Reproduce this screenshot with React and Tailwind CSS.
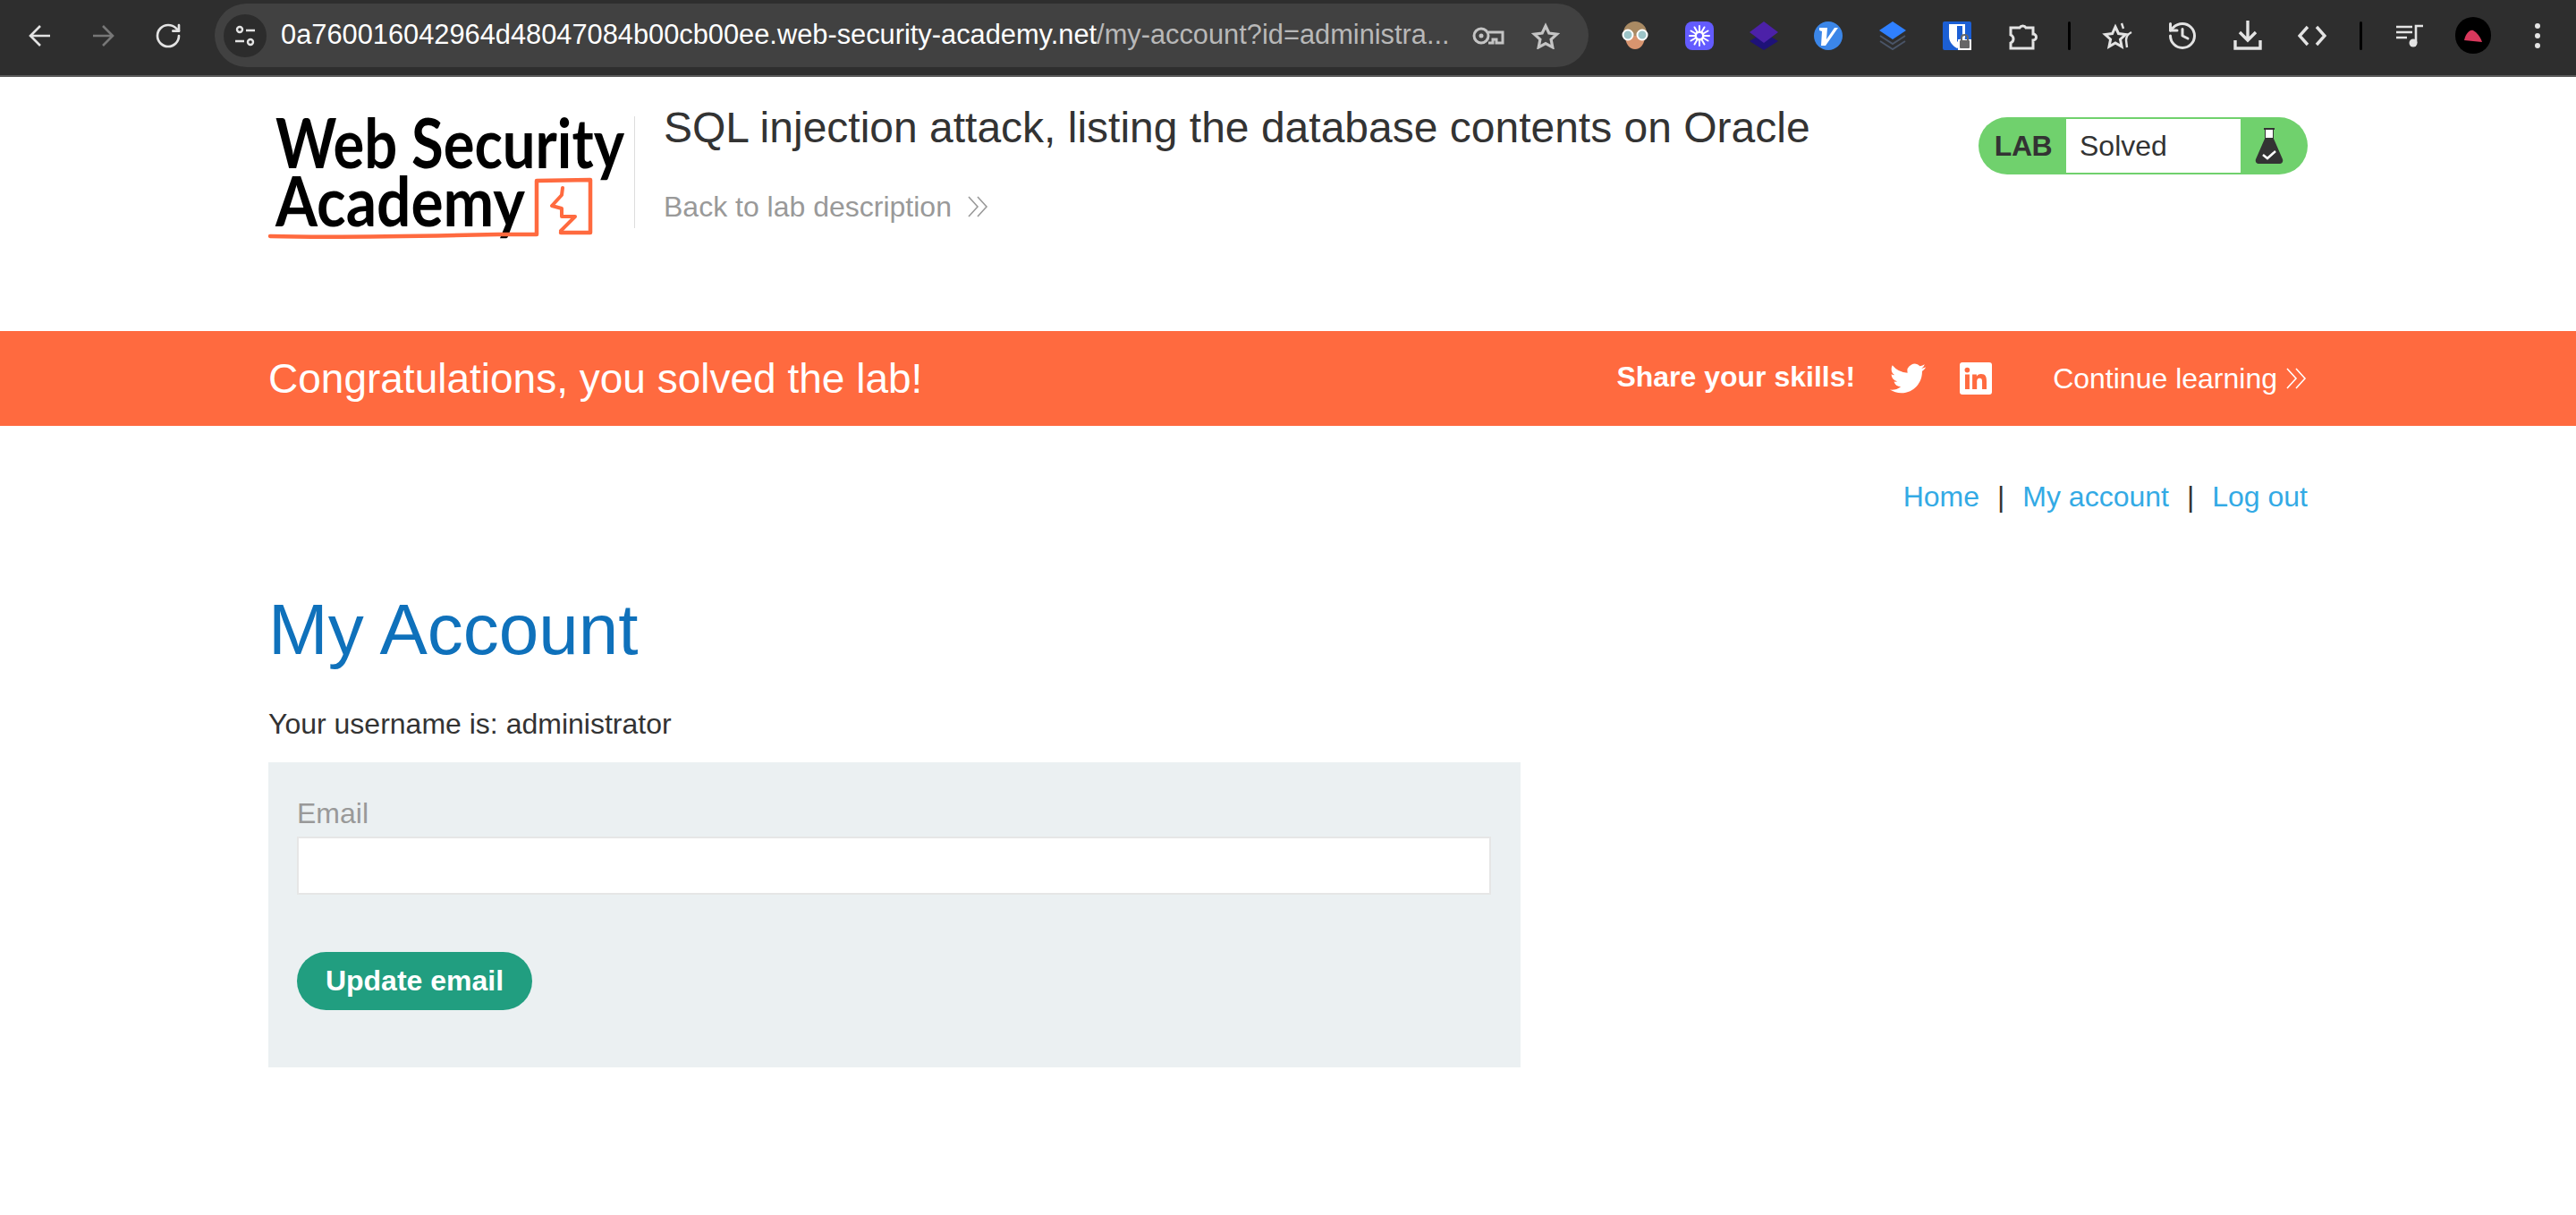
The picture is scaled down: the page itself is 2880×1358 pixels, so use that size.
import { RotateCw, History } from 'lucide-react'

const ARIAL = 'font-["Liberation_Sans",Arial,sans-serif]'
const RAYS = [0, 30, 60, 90, 120, 150]

function Chevrons({ className }) {
  return (
    <svg viewBox="0 0 26 24" fill="none" stroke="currentColor" strokeWidth="1.6" className={className}>
      <path d="M3 1l10 11L3 23M13 1l10 11-10 11" />
    </svg>
  )
}

function Logo() {
  return (
    <svg viewBox="0 0 410 150" className="w-[410px] h-[150px] shrink-0 overflow-visible">
      <text x="8" y="58" fontFamily="Lato, sans-serif" fontSize="76" fontWeight="700" fill="#000" textLength="390" lengthAdjust="spacingAndGlyphs">Web Security</text>
      <text x="8" y="123" fontFamily="Lato, sans-serif" fontSize="76" fontWeight="700" fill="#000" textLength="279" lengthAdjust="spacingAndGlyphs">Academy</text>
      <path d="M2 134c70 2 170 0 255-2h43V72l60-1v59h-33" fill="none" stroke="#ff6a3f" strokeWidth="4.500" strokeLinecap="round" strokeLinejoin="round" />
      <path d="M329 80l-1 8-11 12 11 3v9h15l-16 16" fill="none" stroke="#ff6a3f" strokeWidth="4" strokeLinecap="round" strokeLinejoin="round" />
    </svg>
  )
}

function Flask() {
  return (
    <svg viewBox="0 0 32 40" className="w-[32px] h-[40px]">
      <path d="M10 0h12v2h-1v10l10 23c1 3-1 5-3 5H4c-2 0-4-2-3-5l10-23V2h-1z" fill="#333" />
      <path d="M12 2h8v9h-8z" fill="#fff" />
      <path d="M9 30l5 4 9-8" fill="none" stroke="#fff" strokeWidth="2.5" />
    </svg>
  )
}

function BrowserBar() {
  return (
    <div className="flex items-center h-[86px] pb-[5px] bg-[#2e2e2e] border-b-2 border-[#5a5a5a] text-[#e3e3e3]">
      <div className="flex items-center w-[240px] pl-[32px]">
        <svg viewBox="0 0 24 24" className="w-[24px] h-[24px]" fill="none" stroke="#e3e3e3" strokeWidth="2.6">
          <path d="M24 12H3M13 1L2 12l11 11" />
        </svg>
        <svg viewBox="0 0 24 24" className="w-[24px] h-[24px] ml-[48px]" fill="none" stroke="#777" strokeWidth="2.6">
          <path d="M0 12h21M11 1l11 11-11 11" />
        </svg>
        <RotateCw size={32} strokeWidth={2} className="ml-[44px]" />
      </div>
      <div className="flex items-center w-[1536px] h-[71px] rounded-full bg-[#414141] pl-[10px] pr-[32px]">
        <div className="flex items-center justify-center w-[48px] h-[48px] rounded-full bg-[#2c2c2c] shrink-0">
          <svg viewBox="0 0 24 24" className="w-[24px] h-[24px]" fill="none" stroke="#e3e3e3" strokeWidth="2.4">
            <circle cx="6" cy="5" r="3" /><path d="M13 6h10M1 18h10" /><circle cx="18" cy="19" r="3" />
          </svg>
        </div>
        <div className={`${ARIAL} ml-[16px] text-[30.8px] whitespace-nowrap flex-1 min-w-0 text-white`}>
          0a760016042964d48047084b00cb00ee.web-security-academy.net<span className="text-[#b8b8b8]">/my-account?id=administra...</span>
        </div>
        <svg viewBox="0 0 36 20" className="w-[36px] h-[20px] shrink-0" fill="none" stroke="#c4c4c4" strokeWidth="3">
          <circle cx="10" cy="10" r="8" />
          <circle cx="10" cy="10" r="2.500" fill="#c4c4c4" stroke="none" />
          <path d="M18 6h16v12h-7v-4h-4v4h-5" />
        </svg>
        <svg viewBox="0 0 32 30" className="w-[32px] h-[30px] ml-[30px] shrink-0" fill="none" stroke="#c4c4c4" strokeWidth="3.200">
          <path d="M16 4l3.800 8 8.800 1.100-6.500 6 1.700 8.700L16 23.500l-7.800 4.300 1.700-8.700-6.500-6L12.200 12z" />
        </svg>
      </div>
      <div className="flex items-center flex-1 pl-[37px]">
        <svg viewBox="0 0 30 32" className="w-[30px] h-[32px]">
          <circle cx="15" cy="13" r="13" fill="#a98a63" />
          <path d="M4 16h22c0 9-5 15-11 15S4 25 4 16z" fill="#d8946f" />
          <circle cx="7" cy="15" r="5.500" fill="#9cc4c8" stroke="#fff" strokeWidth="2" />
          <circle cx="23" cy="15" r="5.500" fill="#9cc4c8" stroke="#fff" strokeWidth="2" />
        </svg>
        <div className="flex items-center justify-center w-[32px] h-[32px] rounded-[8px] bg-[#635bff] ml-[41px]">
          <svg viewBox="0 0 24 24" className="w-[24px] h-[24px]">
            {RAYS.map(deg => (
              <path key={deg} d="M12 1v22" stroke="#fff" strokeWidth="2" strokeLinecap="round" transform={`rotate(${deg} 12 12)`} />
            ))}
            <circle cx="12" cy="12" r="5.500" fill="#fff" />
            <circle cx="12" cy="12" r="3" fill="#635bff" />
          </svg>
        </div>
        <svg viewBox="0 0 32 32" className="w-[32px] h-[32px] ml-[40px]">
          <path d="M16 12l16 10-16 10L0 22z" fill="#1e1278" />
          <path d="M16 0l16 12-16 12L0 12z" fill="#4c21a8" />
        </svg>
        <svg viewBox="0 0 32 32" className="w-[32px] h-[32px] ml-[40px]">
          <circle cx="16" cy="16" r="16" fill="#3b86e8" />
          <path d="M6 7h9l-1 13L23 7h4L13 27H8l1-16-3-1z" fill="#fff" />
        </svg>
        <svg viewBox="0 0 30 32" className="w-[30px] h-[32px] ml-[41px]">
          <path d="M15 0l15 10-15 10L0 10z" fill="#2f80ff" />
          <path d="M1 16l14 9 14-9M1 22l14 9 14-9" fill="none" stroke="#4a5568" strokeWidth="2" />
        </svg>
        <svg viewBox="0 0 32 32" className="w-[32px] h-[32px] ml-[41px]">
          <rect width="32" height="32" rx="2" fill="#1c5fd4" />
          <path d="M7 3h18v14c0 6-5 11-9 13-4-2-9-7-9-13z" fill="#fff" />
          <path d="M16 5h6v13c-2 1-4 3-6 5z" fill="#1c5fd4" />
          <path d="M17 32V20h15v12z" fill="#fff" />
          <rect x="19" y="21" width="11" height="9" rx="1" fill="#666" />
          <path d="M21 21v-3c0-4 7-4 7 0v3" fill="none" stroke="#666" strokeWidth="2" />
        </svg>
        <svg viewBox="0 0 32 32" className="w-[32px] h-[32px] ml-[42px]" fill="none" stroke="#e3e3e3" strokeWidth="3">
          <path d="M2 7h10a4 4 0 0 1 7 0h8v7a3.500 3.500 0 0 1 0 7v9H2v-6c4-2 4-7 0-9z" />
        </svg>
        <div className="w-[3px] h-[32px] rounded-full bg-black ml-[34px]" />
        <svg viewBox="0 0 35 32" className="w-[35px] h-[32px] ml-[35px]" fill="none" stroke="#e3e3e3" strokeWidth="3">
          <path d="M15 6l3.500 7.500 8 1-6 5.500 1.600 8L15 24l-7 4 1.600-8-6-5.500 8-1z" />
          <path d="M22 2l2 6M33 12c-4 2-6 4-6 9l1 8" strokeWidth="2.400" />
        </svg>
        <History size={36} strokeWidth={2} className="ml-[37px] -mr-[4px]" />
        <svg viewBox="0 0 32 34" className="w-[32px] h-[34px] ml-[43px]" fill="none" stroke="#e3e3e3" strokeWidth="3.400">
          <path d="M16 0v21M7 13l9 9 9-9M2 22v9h28v-9" />
        </svg>
        <svg viewBox="0 0 32 24" className="w-[32px] h-[24px] ml-[40px]" fill="none" stroke="#e3e3e3" strokeWidth="3.400">
          <path d="M11 2L2 12l9 10M21 2l9 10-9 10" />
        </svg>
        <div className="w-[3px] h-[32px] rounded-full bg-black ml-[37px]" />
        <svg viewBox="0 0 30 26" className="w-[30px] h-[26px] ml-[38px]" fill="none" stroke="#e3e3e3" strokeWidth="2.600">
          <path d="M0 3h18M0 9h18M0 15h12M22 21V2h8" />
          <circle cx="19" cy="21" r="4.500" fill="#e3e3e3" stroke="none" />
        </svg>
        <div className="flex items-center justify-center w-[40px] h-[41px] rounded-full bg-black ml-[36px]">
          <svg viewBox="0 0 20 14" className="w-[20px] h-[14px]"><path d="M0 12C2 4 6 0 10 1c4 2 8 7 10 13z" fill="#d9385c" /></svg>
        </div>
        <svg viewBox="0 0 6 28" className="w-[6px] h-[28px] ml-[49px]" fill="#e3e3e3">
          <circle cx="3" cy="3" r="3" /><circle cx="3" cy="14" r="3" /><circle cx="3" cy="25" r="3" />
        </svg>
      </div>
    </div>
  )
}

function LabHeader() {
  return (
    <div className="flex w-[2280px] mx-auto h-[284px] pt-[44px]">
      <Logo />
      <div className="w-[1px] h-[125px] bg-[#ddd] ml-[-1px]" />
      <div className="ml-[32px] flex-1">
        <h2 className="text-[48px] leading-[50px] text-[#333] mt-[-12px] whitespace-nowrap">SQL injection attack, listing the database contents on Oracle</h2>
        <a className="flex items-center mt-[44px] text-[32px] leading-[38px] text-[#999]">
          Back to lab description
          <Chevrons className="w-[26px] h-[24px] ml-[16px]" />
        </a>
      </div>
      <div className="flex items-stretch w-[368px] h-[64px] mt-[1px] rounded-full bg-[#70d16d] p-[2px]">
        <div className="flex items-center justify-center w-[96px] text-[32px] font-bold text-[#333] tracking-[-0.5px]">LAB</div>
        <div className="flex items-center w-[195px] bg-white text-[32px] text-[#333] pl-[15px]">Solved</div>
        <div className="flex items-center justify-center flex-1 pr-[10px]"><Flask /></div>
      </div>
    </div>
  )
}

function Banner() {
  return (
    <div className="bg-[#ff6a3f] h-[106px] text-white">
      <div className="flex items-center w-[2280px] h-full mx-auto">
        <h4 className="text-[46px] flex-1">Congratulations, you solved the lab!</h4>
        <span className="text-[32px] font-bold mb-[4px]">Share your skills!</span>
        <svg viewBox="0 0 24 24" fill="#fff" className="w-[40px] h-[40px] ml-[39px]">
          <path d="M23.95 4.57a10 10 0 0 1-2.82.77 4.96 4.96 0 0 0 2.16-2.72 9.9 9.9 0 0 1-3.13 1.19 4.92 4.92 0 0 0-8.38 4.48A13.98 13.98 0 0 1 1.64 3.16a4.82 4.82 0 0 0-.67 2.48 4.92 4.92 0 0 0 2.19 4.1 4.9 4.9 0 0 1-2.23-.62v.06a4.92 4.92 0 0 0 3.95 4.83 5 5 0 0 1-2.21.08 4.94 4.94 0 0 0 4.6 3.42A9.87 9.87 0 0 1 0 19.54a14 14 0 0 0 7.56 2.21c9.05 0 14-7.5 14-13.98 0-.21 0-.42-.02-.63a9.94 9.94 0 0 0 2.46-2.55z" />
        </svg>
        <svg viewBox="0 0 24 24" className="w-[36px] h-[36px] ml-[38px]">
          <rect width="24" height="24" rx="2" fill="#fff" />
          <path d="M4 9h3.300v11H4zM5.600 3.800a1.900 1.900 0 1 1 0 3.800 1.900 1.900 0 0 1 0-3.800zM9.400 9h3.200v1.500c.5-.9 1.600-1.800 3.300-1.800 3.500 0 4.100 2.300 4.100 5.300v6h-3.300v-5.300c0-1.300 0-2.900-1.800-2.900s-2.100 1.400-2.100 2.800V20H9.400z" fill="#ff6a3f" />
        </svg>
        <a className="flex items-center ml-[68px] text-[32px]">
          Continue learning
          <Chevrons className="w-[26px] h-[24px] ml-[8px]" />
        </a>
      </div>
    </div>
  )
}

export default function App() {
  return (
    <div className={`${ARIAL} min-h-[1358px] bg-white text-[#333]`}>
      <BrowserBar />
      <LabHeader />
      <Banner />
      <div className="w-[2280px] mx-auto">
        <nav className="flex justify-end items-center mt-[60px] text-[32px] leading-[38px]">
          <a className="text-[#33aae5]">Home</a>
          <span className="mx-[20px]">|</span>
          <a className="text-[#33aae5]">My account</a>
          <span className="mx-[20px]">|</span>
          <a className="text-[#33aae5]">Log out</a>
        </nav>
        <h1 className="mt-[80px] text-[80px] leading-[100px] text-[#0f71bb]">My Account</h1>
        <p className="mt-[35px] text-[32px] leading-[40px]">Your username is: administrator</p>
        <form className="w-[1400px] h-[341px] mt-[23px] bg-[#ebf0f2] px-[32px] pt-[38px]">
          <label className="block text-[32px] leading-[38px] text-[#999]">Email</label>
          <input className="block w-[1335px] h-[65px] mt-[7px] bg-white border-2 border-[#e6e6e6]" />
          <button type="button" className="block w-[263px] h-[65px] mt-[64px] pb-[2px] rounded-full bg-[#219e80] text-white text-[32px] font-bold">Update email</button>
        </form>
      </div>
    </div>
  )
}
